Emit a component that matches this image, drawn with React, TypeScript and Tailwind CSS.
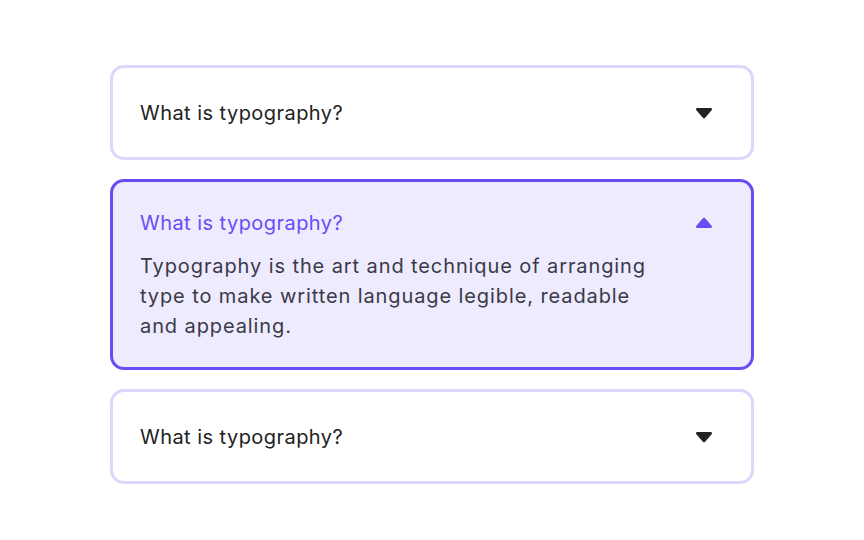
import { useState } from "react";

const faqs = [
  {
    q: "What is typography?",
    a: "Typography is the art and technique of arranging type to make written language legible, readable and appealing.",
  },
  {
    q: "What is typography?",
    a: "Typography is the art and technique of arranging type to make written language legible, readable and appealing.",
  },
  {
    q: "What is typography?",
    a: "Typography is the art and technique of arranging type to make written language legible, readable and appealing.",
  },
];

function Caret({ up }: { up: boolean }) {
  return (
    <svg width="18" height="12" viewBox="0 0 18 12" className="shrink-0">
      {up ? (
        <path
          d="M7.6 1.6a1.8 1.8 0 0 1 2.8 0l6.2 7.2c.9 1.1.2 2.2-1.3 2.2H2.7c-1.5 0-2.2-1.1-1.3-2.2z"
          fill="#6a4cf5"
        />
      ) : (
        <path
          d="M7.6 10.4a1.8 1.8 0 0 0 2.8 0l6.2-7.2C17.5 2.1 16.8 1 15.3 1H2.7C1.2 1 .5 2.1 1.4 3.2z"
          fill="#232323"
        />
      )}
    </svg>
  );
}

export default function App() {
  const [open, setOpen] = useState(1);

  return (
    <div className="w-[864px] h-[540px] bg-white flex justify-center pt-[65px] font-['Inter',sans-serif]">
      <div className="w-[644px] flex flex-col gap-[19px]">
        {faqs.map((item, i) => {
          const isOpen = open === i;
          return (
            <div
              key={i}
              onClick={() => setOpen(isOpen ? -1 : i)}
              className={
                isOpen
                  ? "rounded-[14px] border-[3px] border-[#6a4cf5] bg-[#edebfd] pl-[27px] pr-[38px] pt-[27px] pb-[26px] cursor-pointer"
                  : "rounded-[14px] border-[3px] border-[#dbd6fc] bg-white pl-[27px] pr-[38px] pt-[31px] pb-[30px] cursor-pointer"
              }
            >
              <div className="flex items-center justify-between">
                <p
                  className={
                    isOpen
                      ? "text-[20px] leading-[28px] tracking-[0.45px] text-[#6a4cf5]"
                      : "text-[20px] leading-[28px] tracking-[0.45px] text-[#222222]"
                  }
                >
                  {item.q}
                </p>
                <Caret up={isOpen} />
              </div>
              {isOpen && (
                <p className="mt-[14px] w-[530px] text-[20px] leading-[30px] text-[#3a3a48] tracking-[0.9px]">
                  {item.a}
                </p>
              )}
            </div>
          );
        })}
      </div>
    </div>
  );
}
